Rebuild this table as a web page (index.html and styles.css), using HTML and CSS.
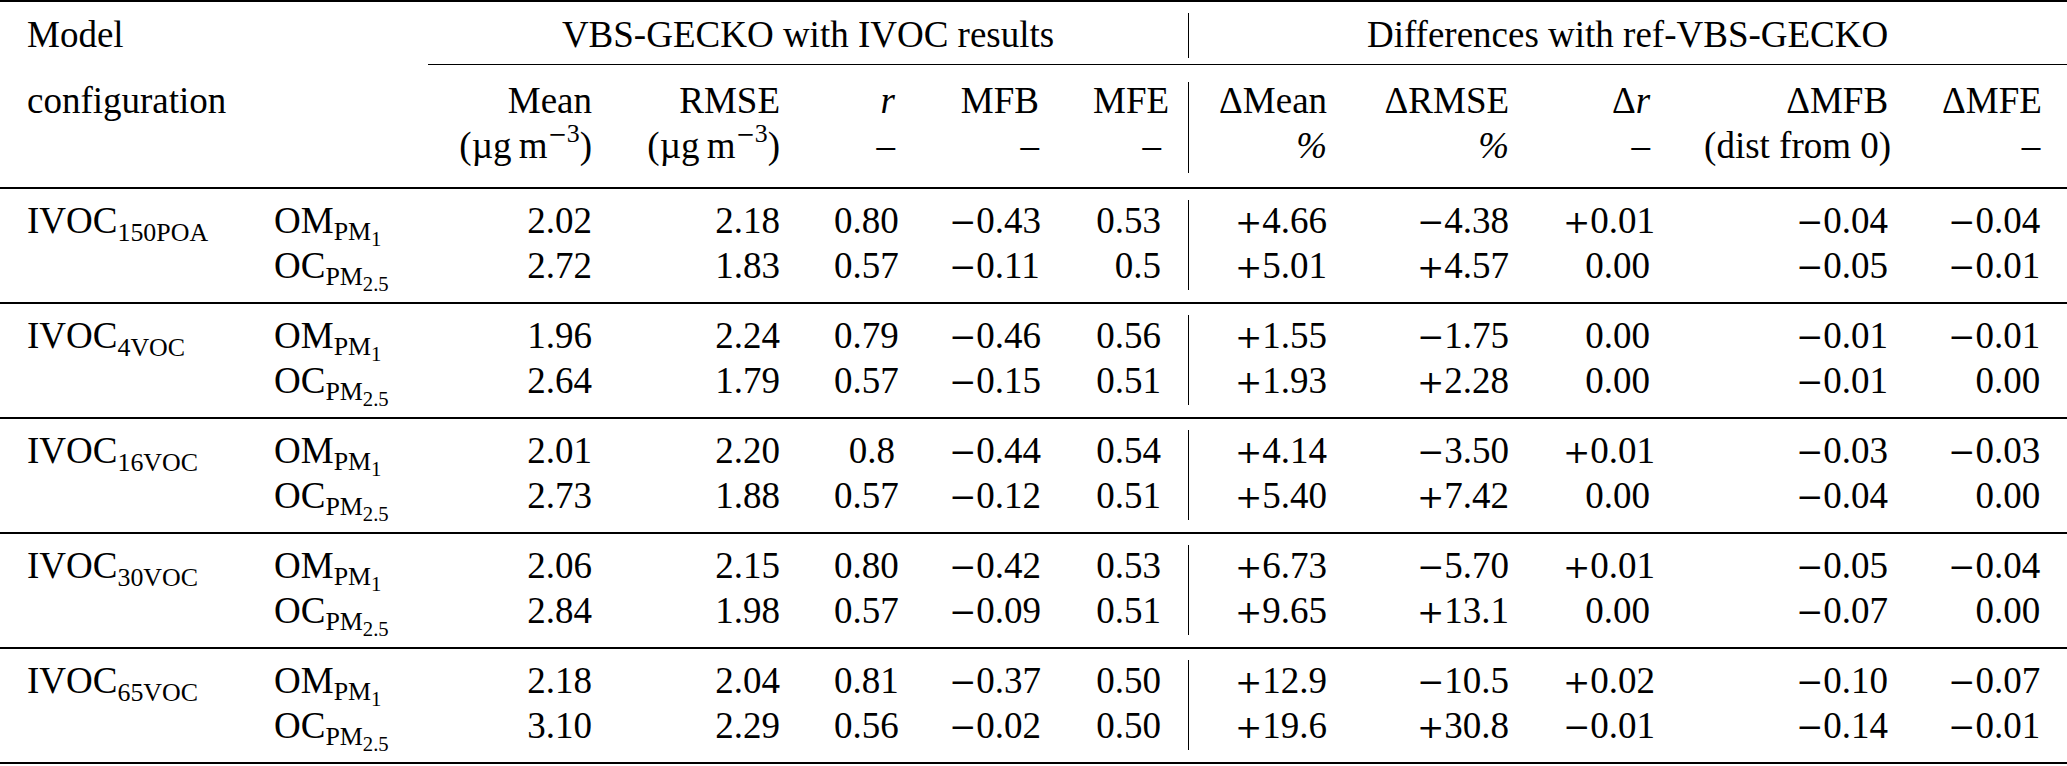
FILE: index.html
```html
<!DOCTYPE html>
<html lang="en">
<head>
<meta charset="utf-8">
<title>VBS-GECKO with IVOC results</title>
<link rel="stylesheet" href="styles.css">
</head>
<body>
<table class="tbl">
  <colgroup>
    <col class="w1"><col class="w2"><col class="w3"><col class="w4"><col class="w5"><col class="w6">
    <col class="w7"><col class="w8"><col class="w9"><col class="w10"><col class="w11"><col class="w12">
  </colgroup>
  <thead>
    <tr class="h1">
      <th class="l" colspan="2">Model</th>
      <th class="c span" colspan="5">VBS-GECKO with IVOC results</th>
      <th class="c span dv" colspan="5">Differences with ref-VBS-GECKO</th>
    </tr>
    <tr class="h2">
      <th class="l" colspan="2">configuration</th>
      <th>Mean</th><th>RMSE</th><th><i>r</i></th><th>MFB</th><th>MFE</th>
      <th class="dv">ΔMean</th><th>ΔRMSE</th><th>Δ<i>r</i></th><th>ΔMFB</th><th>ΔMFE</th>
    </tr>
    <tr class="h3">
      <th class="l" colspan="2"></th>
      <th>(µg&#8201;m<sup class="sp"><span class="sg">−</span>3</sup>)</th><th>(µg&#8201;m<sup class="sp"><span class="sg">−</span>3</sup>)</th><th>–</th><th>–</th><th>–</th>
      <th class="dv"><i>%</i></th><th><i>%</i></th><th>–</th><th>(dist from 0)</th><th>–</th>
    </tr>
  </thead>
  <tbody>
    <tr class="r1">
      <td class="l">IVOC<sub class="sb">150POA</sub></td>
      <td class="l">OM<sub class="sb2">PM<sub class="sb3">1</sub></sub></td>
      <td>2.02</td><td>2.18</td><td>0.80</td><td><span class="sg">−</span>0.43</td><td>0.53</td>
      <td class="dv"><span class="sg">+</span>4.66</td><td><span class="sg">−</span>4.38</td><td><span class="sg">+</span>0.01</td><td><span class="sg">−</span>0.04</td><td><span class="sg">−</span>0.04</td>
    </tr>
    <tr class="r2">
      <td class="l"></td>
      <td class="l">OC<sub class="sb2">PM<sub class="sb3">2.5</sub></sub></td>
      <td>2.72</td><td>1.83</td><td>0.57</td><td><span class="sg">−</span>0.11</td><td>0.5</td>
      <td class="dv"><span class="sg">+</span>5.01</td><td><span class="sg">+</span>4.57</td><td>0.00</td><td><span class="sg">−</span>0.05</td><td><span class="sg">−</span>0.01</td>
    </tr>
  </tbody>
  <tbody>
    <tr class="r1">
      <td class="l">IVOC<sub class="sb">4VOC</sub></td>
      <td class="l">OM<sub class="sb2">PM<sub class="sb3">1</sub></sub></td>
      <td>1.96</td><td>2.24</td><td>0.79</td><td><span class="sg">−</span>0.46</td><td>0.56</td>
      <td class="dv"><span class="sg">+</span>1.55</td><td><span class="sg">−</span>1.75</td><td>0.00</td><td><span class="sg">−</span>0.01</td><td><span class="sg">−</span>0.01</td>
    </tr>
    <tr class="r2">
      <td class="l"></td>
      <td class="l">OC<sub class="sb2">PM<sub class="sb3">2.5</sub></sub></td>
      <td>2.64</td><td>1.79</td><td>0.57</td><td><span class="sg">−</span>0.15</td><td>0.51</td>
      <td class="dv"><span class="sg">+</span>1.93</td><td><span class="sg">+</span>2.28</td><td>0.00</td><td><span class="sg">−</span>0.01</td><td>0.00</td>
    </tr>
  </tbody>
  <tbody>
    <tr class="r1">
      <td class="l">IVOC<sub class="sb">16VOC</sub></td>
      <td class="l">OM<sub class="sb2">PM<sub class="sb3">1</sub></sub></td>
      <td>2.01</td><td>2.20</td><td>0.8</td><td><span class="sg">−</span>0.44</td><td>0.54</td>
      <td class="dv"><span class="sg">+</span>4.14</td><td><span class="sg">−</span>3.50</td><td><span class="sg">+</span>0.01</td><td><span class="sg">−</span>0.03</td><td><span class="sg">−</span>0.03</td>
    </tr>
    <tr class="r2">
      <td class="l"></td>
      <td class="l">OC<sub class="sb2">PM<sub class="sb3">2.5</sub></sub></td>
      <td>2.73</td><td>1.88</td><td>0.57</td><td><span class="sg">−</span>0.12</td><td>0.51</td>
      <td class="dv"><span class="sg">+</span>5.40</td><td><span class="sg">+</span>7.42</td><td>0.00</td><td><span class="sg">−</span>0.04</td><td>0.00</td>
    </tr>
  </tbody>
  <tbody>
    <tr class="r1">
      <td class="l">IVOC<sub class="sb">30VOC</sub></td>
      <td class="l">OM<sub class="sb2">PM<sub class="sb3">1</sub></sub></td>
      <td>2.06</td><td>2.15</td><td>0.80</td><td><span class="sg">−</span>0.42</td><td>0.53</td>
      <td class="dv"><span class="sg">+</span>6.73</td><td><span class="sg">−</span>5.70</td><td><span class="sg">+</span>0.01</td><td><span class="sg">−</span>0.05</td><td><span class="sg">−</span>0.04</td>
    </tr>
    <tr class="r2">
      <td class="l"></td>
      <td class="l">OC<sub class="sb2">PM<sub class="sb3">2.5</sub></sub></td>
      <td>2.84</td><td>1.98</td><td>0.57</td><td><span class="sg">−</span>0.09</td><td>0.51</td>
      <td class="dv"><span class="sg">+</span>9.65</td><td><span class="sg">+</span>13.1</td><td>0.00</td><td><span class="sg">−</span>0.07</td><td>0.00</td>
    </tr>
  </tbody>
  <tbody class="last">
    <tr class="r1">
      <td class="l">IVOC<sub class="sb">65VOC</sub></td>
      <td class="l">OM<sub class="sb2">PM<sub class="sb3">1</sub></sub></td>
      <td>2.18</td><td>2.04</td><td>0.81</td><td><span class="sg">−</span>0.37</td><td>0.50</td>
      <td class="dv"><span class="sg">+</span>12.9</td><td><span class="sg">−</span>10.5</td><td><span class="sg">+</span>0.02</td><td><span class="sg">−</span>0.10</td><td><span class="sg">−</span>0.07</td>
    </tr>
    <tr class="r2">
      <td class="l"></td>
      <td class="l">OC<sub class="sb2">PM<sub class="sb3">2.5</sub></sub></td>
      <td>3.10</td><td>2.29</td><td>0.56</td><td><span class="sg">−</span>0.02</td><td>0.50</td>
      <td class="dv"><span class="sg">+</span>19.6</td><td><span class="sg">+</span>30.8</td><td><span class="sg">−</span>0.01</td><td><span class="sg">−</span>0.14</td><td><span class="sg">−</span>0.01</td>
    </tr>
  </tbody>
</table>
</body>
</html>
```

FILE: styles.css
```css
html, body {
  margin: 0;
  padding: 0;
  background: #ffffff;
}

.tbl {
  border-collapse: separate;
  border-spacing: 0;
  table-layout: fixed;
  width: 2067px;
  font-family: "Liberation Serif", "Times New Roman", serif;
  font-size: 37px;
  line-height: 45px;
  color: #000000;
}

.w1 { width: 247px; }
.w2 { width: 181px; }
.w3 { width: 191px; }
.w4 { width: 188px; }
.w5 { width: 115px; }
.w6 { width: 144px; }
.w7 { width: 122px; }
.w8 { width: 166px; }
.w9 { width: 182px; }
.w10 { width: 141px; }
.w11 { width: 238px; }
.w12 { width: 152px; }

.tbl th,
.tbl td {
  padding: 0 27px;
  white-space: nowrap;
  text-align: right;
  font-weight: normal;
  vertical-align: top;
}

.tbl .l { text-align: left; }
.tbl .c { text-align: center; }

/* header rows */
.h1 th {
  border-top: 2px solid #000;
  padding-top: 10px;
  padding-bottom: 7px;
}
.h1 .span {
  border-bottom: 1px solid #000;
}
.h2 th { padding-top: 13px; }
.h3 th { padding-bottom: 19px; }

/* body groups */
.r1 td {
  border-top: 2px solid #000;
  padding-top: 9px;
}
.r2 td { padding-bottom: 14px; }
.last .r2 td { border-bottom: 2px solid #000; }

/* vertical divider, with booktabs-like gaps near the rules */
.dv {
  background-image: linear-gradient(#000, #000);
  background-repeat: no-repeat;
  background-origin: padding-box;
}
.h1 .dv { background-size: 1px 45px; background-position: 0 11px; }
.h2 .dv { background-size: 1px calc(100% - 17px); background-position: 0 17px; }
.h3 .dv { background-size: 1px calc(100% - 14px); background-position: 0 0; }
.r1 .dv { background-size: 1px calc(100% - 11px); background-position: 0 11px; }
.r2 .dv { background-size: 1px calc(100% - 12px); background-position: 0 0; }

/* math signs: wider, like TeX binary operators */
.sg {
  font-family: "DejaVu Serif", "Liberation Serif", serif;
  font-size: 0.88em;
  line-height: 0;
}

/* sub / superscripts */
.sb {
  font-size: 0.7em;
  line-height: 0;
  vertical-align: -0.32em;
}
.sb2 {
  font-size: 0.7em;
  line-height: 0;
  vertical-align: -0.26em;
}
.sb3 {
  font-size: 0.8em;
  line-height: 0;
  vertical-align: -0.3em;
}
.sp {
  font-size: 0.7em;
  line-height: 0;
  vertical-align: 0.62em;
}
```
